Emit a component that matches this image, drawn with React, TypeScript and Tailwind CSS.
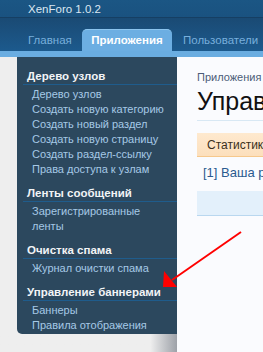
import React from 'react';

const groups = [
  {
    title: 'Дерево узлов',
    items: [
      ['Дерево узлов'],
      ['Создать новую категорию'],
      ['Создать новый раздел'],
      ['Создать новую страницу'],
      ['Создать раздел-ссылку'],
      ['Права доступа к узлам'],
    ],
  },
  { title: 'Ленты сообщений', items: [['Зарегистрированные', 'ленты']] },
  { title: 'Очистка спама', items: [['Журнал очистки спама']] },
  { title: 'Управление баннерами', items: [['Баннеры'], ['Правила отображения']] },
];

const App: React.FC = () => {
  return (
    <div
      className="relative w-[263px] h-[352px] overflow-hidden bg-[#eeeeee]"
      style={{ fontFamily: '"Liberation Sans", Arial, sans-serif' }}
    >
      {/* header */}
      <div className="h-[18px] bg-gradient-to-b from-[#1b5684] to-[#1a5280] border-b border-[#163f63] pl-[28px] text-[11.5px] leading-[18px] text-[#dbe7f2]">
        XenForo 1.0.2
      </div>
      {/* tabs */}
      <div className="h-[33px] bg-gradient-to-b from-[#1a4a74] to-[#1c5a8d] flex items-end text-[11.5px] whitespace-nowrap">
        <div className="ml-[28px] w-[54px] h-[21px] leading-[20px] text-[#78afdc]">Главная</div>
        <div className="w-[90px] h-[22px] rounded-t-[5px] bg-[#6caee2] border-t border-[#8cc4ee] text-white font-bold leading-[20px] text-center">
          Приложения
        </div>
        <div className="ml-[11px] h-[21px] leading-[20px] text-[#78afdc]">Пользователи</div>
      </div>
      <div className="h-[6px] bg-[#6aade1]" />

      <div className="flex">
        {/* sidebar */}
        <div className="w-[177px] shrink-0 flex flex-col">
          <div className="ml-[17px] bg-[#2c485e] rounded-bl-[5px] pt-[11px] pb-[1px] whitespace-nowrap">
            {groups.map((g, i) => (
              <div key={g.title} className={i > 0 ? 'mt-[8px]' : ''}>
                <div className="ml-[6px] pl-[4px] font-bold text-[11.5px] text-[#f2f4f6] leading-[16px] border-b border-[#1f5c8c]">
                  {g.title}
                </div>
                <div className="pl-[15px] pt-[2px] text-[11px]">
                  {g.items.map((lines) => (
                    <div key={lines[0]} className="text-[#a6c8e6] leading-[15px]">
                      {lines.map((l) => (
                        <div key={l}>{l}</div>
                      ))}
                    </div>
                  ))}
                </div>
              </div>
            ))}
          </div>
          <div className="h-[24px] bg-gradient-to-r from-[#eeeeee] from-[85%] to-[#9da1a8]" />
        </div>

        {/* content */}
        <div className="flex-1 bg-[#fafbfe] h-[300px] pl-[20px] pt-[13px] overflow-hidden whitespace-nowrap">
          <div className="text-[11px] text-[#4b5c78] leading-[14px]">Приложения</div>
          <div className="text-[25px] text-[#111] leading-[30px] mt-[2px] pb-[4px] border-b border-[#d8e8f4]">
            Управление баннерами
          </div>
          <div className="mt-[12px] h-[24px] bg-gradient-to-b from-[#fee9cf] to-[#fcdfbc] border-b border-[#f6c88c] pl-[10px] text-[12px] leading-[24px] text-[#3a3020]">
            Статистика
          </div>
          <div className="mt-[6px] pl-[6px] text-[13px] leading-[20px] text-[#2a5a8f]">[1] Ваша реклама</div>
          <div className="mt-[8px] h-[25px] bg-[#e3f0fb] border-b border-[#b9d7ef]" />
        </div>
      </div>

      {/* red arrow annotation */}
      <svg className="absolute left-0 top-0" width="263" height="352" viewBox="0 0 263 352">
        <line x1="241" y1="232" x2="172" y2="280" stroke="#ff0000" strokeWidth="2" />
        <polygon points="163,287 164,271 177,287" fill="#ff0000" />
      </svg>
    </div>
  );
};

export default App;
